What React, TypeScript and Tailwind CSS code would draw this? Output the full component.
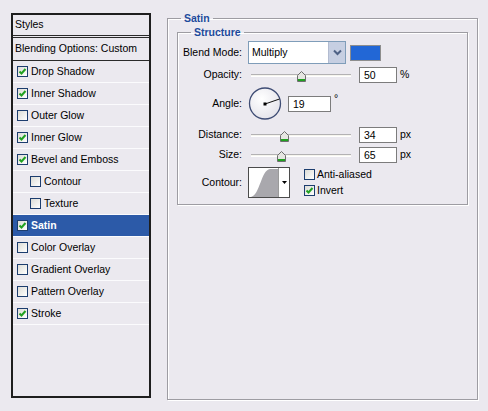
import React from "react";

type Row = { name: string; checked: boolean; indent?: boolean; selected?: boolean };

const rows: Row[] = [
  { name: "Drop Shadow", checked: true },
  { name: "Inner Shadow", checked: true },
  { name: "Outer Glow", checked: false },
  { name: "Inner Glow", checked: true },
  { name: "Bevel and Emboss", checked: true },
  { name: "Contour", checked: false, indent: true },
  { name: "Texture", checked: false, indent: true },
  { name: "Satin", checked: true, selected: true },
  { name: "Color Overlay", checked: false },
  { name: "Gradient Overlay", checked: false },
  { name: "Pattern Overlay", checked: false },
  { name: "Stroke", checked: true },
];

// XP style checkbox with green tick
const Check = ({ on }: { on: boolean }) => (
  <span className="flex h-[11px] w-[11px] shrink-0 items-center justify-center border border-[#1c3d6e] bg-gradient-to-br from-[#dcdcd6] to-[#ffffff]">
    {on && (
      <svg width="9" height="9" viewBox="0 0 9 9">
        <path d="M1.5 4.5 L3.5 6.5 L7.5 2" fill="none" stroke="#21a121" strokeWidth="2" />
      </svg>
    )}
  </span>
);

const Slider = ({ pct }: { pct: number }) => (
  <div className="relative ml-[3px] h-[16px] w-[100px]">
    <div className="absolute left-0 right-0 top-[7px] h-[3px] border-t border-[#b3b2b4] border-b border-b-white bg-[#f6f5ee]" />
    <svg
      className="absolute top-[4px]"
      style={{ left: `${pct}%`, marginLeft: -4 }}
      width="9"
      height="11"
      viewBox="0 0 9 11"
    >
      <path d="M0.5 4.5 L4.5 0.5 L8.5 4.5 V10.5 H0.5 Z" fill="#e6e6e2" stroke="#6d6d6d" />
      <rect x="1" y="8" width="7" height="2" fill="#21a121" />
    </svg>
  </div>
);

const Field = ({ value, w = "w-[38px]" }: { value: string; w?: string }) => (
  <div className={`${w} h-[16px] border border-[#7c7c7c] bg-white pl-[4px] leading-[14px]`}>{value}</div>
);

const Label = ({ text }: { text: string }) => (
  <span className="w-[65px] shrink-0 pr-[1px] text-right">{text}</span>
);

export default function App() {
  return (
    <div
      className="flex h-[411px] w-[488px] items-start bg-[#ebe9ef] text-[10.5px] text-black"
      style={{ fontFamily: '"Liberation Sans", Arial, sans-serif' }}
    >
      {/* styles list */}
      <div className="ml-[11px] mt-[13px] flex h-[385px] w-[140px] flex-col border-2 border-[#1e1e1e] bg-[#ebe9ef]">
        <div className="flex h-[23px] items-center border-b-[3px] border-double border-[#2a2a2a] pl-[2px]">Styles</div>
        <div className="flex h-[23px] items-center border-b border-[#2a2a2a] pl-[2px]">Blending Options: Custom</div>
        {rows.map((r) => (
          <div
            key={r.name}
            className={`flex h-[22px] items-center gap-[3px] border-b border-[#fbfbfd] ${
              r.indent ? "pl-[17px]" : "pl-[4px]"
            } ${r.selected ? "bg-[#2c5aa8] font-bold text-white" : ""}`}
          >
            <Check on={r.checked} />
            <span>{r.name}</span>
          </div>
        ))}
      </div>

      {/* satin settings */}
      <fieldset className="ml-[16px] mt-[11px] h-[389px] w-[311px] border border-[#9d9ca2] pl-[9px] pr-[9px] shadow-[inset_1px_1px_0_#ffffff,1px_1px_0_#ffffff]">
        <legend className="ml-[4px] px-[3px] font-bold leading-[14px] text-[#1d4b9c]">Satin</legend>
        <fieldset className="w-[291px] border border-[#9d9ca2] pb-[6px] pt-[2px] shadow-[inset_1px_1px_0_#ffffff,1px_1px_0_#ffffff]">
          <legend className="ml-[13px] px-[3px] font-bold leading-[14px] text-[#1d4b9c]">Structure</legend>

          <div className="flex h-[23px] items-center">
            <Label text="Blend Mode:" />
            <div className="ml-[5px] flex h-[23px] w-[98px] border border-[#7f9db9] bg-white">
              <span className="flex-1 pl-[3px] leading-[21px]">Multiply</span>
              <span className="flex w-[17px] items-center justify-center border-l border-[#b2bbd0] bg-[#c6cfe2]">
                <svg width="9" height="7" viewBox="0 0 9 7">
                  <path d="M1 1.5 L4.5 5 L8 1.5" fill="none" stroke="#4d6185" strokeWidth="2" />
                </svg>
              </span>
            </div>
            <div className="ml-[4px] h-[16px] w-[31px] border border-[#8d8d8d] bg-[#2267d6]" />
          </div>

          <div className="mt-[3px] flex h-[16px] items-center">
            <Label text="Opacity:" />
            <div className="ml-[5px]" />
            <Slider pct={50} />
            <div className="ml-[8px]" />
            <Field value="50" />
            <span className="ml-[3px]">%</span>
          </div>

          <div className="mt-[4px] flex h-[33px] items-center">
            <Label text="Angle:" />
            <svg className="ml-[5px]" width="34" height="33" viewBox="0 0 34 33">
              <defs>
                <radialGradient id="dial" cx="40%" cy="35%" r="70%">
                  <stop offset="0%" stopColor="#ffffff" />
                  <stop offset="100%" stopColor="#e4e3ea" />
                </radialGradient>
              </defs>
              <circle cx="17" cy="16.5" r="15.5" fill="url(#dial)" stroke="#3e4c74" strokeWidth="1.3" />
              <line x1="17" y1="17" x2="31.5" y2="12" stroke="#111" strokeWidth="1" />
              <rect x="15.5" y="15.5" width="3" height="3" fill="#000" />
            </svg>
            <div className="ml-[6px]">
              <Field value="19" w="w-[43px]" />
            </div>
            <span className="ml-[3px] mt-[6px] self-start leading-[10px]">°</span>
          </div>

          <div className="mt-[7px] flex h-[16px] items-center">
            <Label text="Distance:" />
            <div className="ml-[5px]" />
            <Slider pct={33} />
            <div className="ml-[8px]" />
            <Field value="34" />
            <span className="ml-[3px]">px</span>
          </div>

          <div className="mt-[4px] flex h-[16px] items-center">
            <Label text="Size:" />
            <div className="ml-[5px]" />
            <Slider pct={30} />
            <div className="ml-[8px]" />
            <Field value="65" />
            <span className="ml-[3px]">px</span>
          </div>

          <div className="mt-[4px] flex h-[31px] items-center">
            <Label text="Contour:" />
            <div className="ml-[5px] flex h-[31px] w-[42px] border border-[#4b4b4b] bg-white">
              <svg width="29" height="29" viewBox="0 0 29 29">
                <path d="M2 29 C 11 27, 12 2, 21 1 L 29 1 L 29 29 Z" fill="#a9a8ad" />
              </svg>
              <span className="flex flex-1 items-center justify-center border-l border-[#9a9a9a]">
                <svg width="5" height="3" viewBox="0 0 5 3">
                  <path d="M0 0 H5 L2.5 3 Z" fill="#000" />
                </svg>
              </span>
            </div>
            <div className="ml-[14px] flex flex-col gap-[3px]">
              <label className="flex h-[13px] items-center gap-[2px]">
                <Check on={false} />
                <span>Anti-aliased</span>
              </label>
              <label className="flex h-[13px] items-center gap-[2px]">
                <Check on={true} />
                <span>Invert</span>
              </label>
            </div>
          </div>
        </fieldset>
      </fieldset>
    </div>
  );
}
